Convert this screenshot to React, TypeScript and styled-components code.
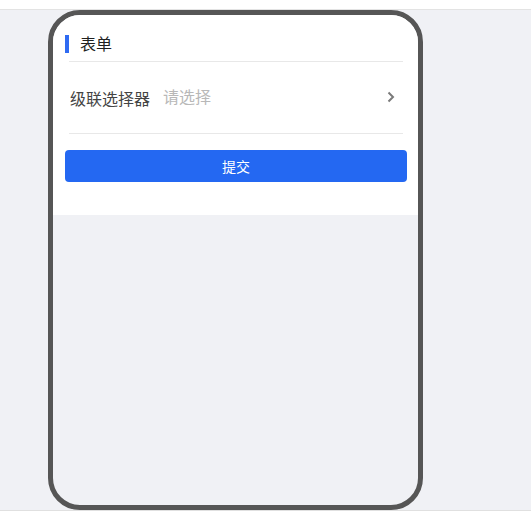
import React from 'react';
import styled, { createGlobalStyle } from 'styled-components';

const GlobalStyle = createGlobalStyle`
  body {
    margin: 0;
    background: #ffffff;
    font-family: "Noto Sans", "Noto Sans CJK SC", sans-serif;
  }
`;

export default function App() {
  return (
    <>
      <GlobalStyle />
      <TopBar />
      <Stage>
        <Phone>
          <Card>
            <Header>
              <Accent />
              <HeaderTitle>表单</HeaderTitle>
            </Header>
            <Divider />
            <Field>
              <Label>级联选择器</Label>
              <Placeholder>请选择</Placeholder>
              <Chevron viewBox="0 0 8 12" aria-hidden>
                <path d="M1.5 1.5 L6 6 L1.5 10.5" />
              </Chevron>
            </Field>
            <Divider />
            <Actions>
              <SubmitButton type="button">提交</SubmitButton>
            </Actions>
          </Card>
        </Phone>
      </Stage>
    </>
  );
}

const TopBar = styled.div`
  height: 9px;
  border-bottom: 1px solid #e3e3e3;
`;

const Stage = styled.div`
  height: 500px;
  background: #f0f1f5;
  border-bottom: 1px solid #e0e0e0;
  padding-left: 48px;
`;

const Phone = styled.div`
  box-sizing: border-box;
  width: 375px;
  height: 500px;
  border: 5px solid #565656;
  border-radius: 32px;
  overflow: hidden;
  background: #f0f1f5;
`;

const Card = styled.div`
  background: #ffffff;
  padding-bottom: 33px;
`;

const Header = styled.div`
  display: flex;
  align-items: center;
  margin: 0 12px;
  padding: 20px 0 8px;
`;

const Accent = styled.span`
  width: 4px;
  height: 18px;
  background: #2f6bf2;
  margin-right: 11px;
`;

const HeaderTitle = styled.span`
  font-size: 16px;
  line-height: 18px;
  color: #1f1f1f;
`;

const Divider = styled.div`
  height: 1px;
  background: #e8e8e8;
  margin: 0 15px 0 16px;
`;

const Field = styled.div`
  display: flex;
  align-items: center;
  height: 71px;
  margin: 0 23px 0 17px;
`;

const Label = styled.span`
  font-size: 16px;
  color: #444444;
  margin-right: 13px;
`;

const Placeholder = styled.span`
  flex: 1;
  font-size: 16px;
  color: #b8b8b8;
  padding-bottom: 3px;
`;

const Chevron = styled.svg`
  width: 8px;
  height: 12px;
  fill: none;
  stroke: #7a7a7a;
  stroke-width: 2;
  margin-bottom: 2px;
`;

const Actions = styled.div`
  padding: 16px 11px 0 12px;
`;

const SubmitButton = styled.button`
  display: block;
  width: 100%;
  height: 32px;
  border: none;
  border-radius: 4px;
  background: #2468f2;
  color: #ffffff;
  font-family: inherit;
  font-size: 14px;
`;
